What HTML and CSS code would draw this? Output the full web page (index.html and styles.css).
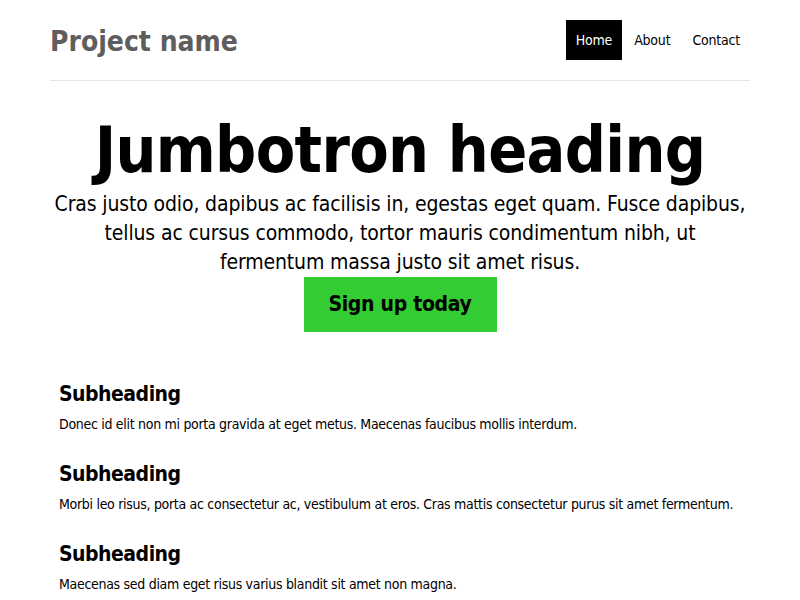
FILE: index.html
```html
<!DOCTYPE html>
<html>
<head>
<meta charset="utf-8">
<title>Jumbotron</title>
<link rel="stylesheet" href="styles.css">
</head>
<body>
<div class="container">
  <header class="masthead">
    <h3 class="brand">Project name</h3>
    <nav class="nav">
      <a class="nav-link active" href="#">Home</a>
      <a class="nav-link" href="#">About</a>
      <a class="nav-link" href="#">Contact</a>
    </nav>
  </header>
  <section class="jumbotron">
    <h1 class="jumbo-title">Jumbotron heading</h1>
    <p class="lead">Cras justo odio, dapibus ac facilisis in, egestas eget quam. Fusce dapibus, tellus ac cursus commodo, tortor mauris condimentum nibh, ut fermentum massa justo sit amet risus.</p>
    <a class="btn" href="#">Sign up today</a>
  </section>
  <section class="marketing">
    <div class="item">
      <h4 class="sub">Subheading</h4>
      <p class="text">Donec id elit non mi porta gravida at eget metus. Maecenas faucibus mollis interdum.</p>
    </div>
    <div class="item">
      <h4 class="sub">Subheading</h4>
      <p class="text">Morbi leo risus, porta ac consectetur ac, vestibulum at eros. Cras mattis consectetur purus sit amet fermentum.</p>
    </div>
    <div class="item">
      <h4 class="sub">Subheading</h4>
      <p class="text">Maecenas sed diam eget risus varius blandit sit amet non magna.</p>
    </div>
  </section>
</div>
</body>
</html>
```
FILE: styles.css
```css
html, body {
  margin: 0;
  padding: 0;
  background: #fff;
}
body {
  font-family: "DejaVu Sans Condensed", "DejaVu Sans", sans-serif;
  color: #000;
}
.container {
  width: 700px;
  margin: 0 auto;
}
.masthead {
  display: flex;
  justify-content: space-between;
  align-items: center;
  padding: 20px 0 20px;
  border-bottom: 1px solid #e5e5e5;
}
.brand {
  margin: 0;
  padding-top: 4px;
  font-size: 28px;
  font-weight: bold;
  color: #5e5e5e;
  line-height: 36px;
}
.nav {
  display: flex;
  gap: 2px;
  margin-right: 0;
}
.nav-link {
  display: block;
  padding: 0 10px;
  line-height: 40px;
  font-size: 14px;
  letter-spacing: -0.2px;
  color: #000;
  text-decoration: none;
}
.nav-link.active {
  background: #000;
  color: #fff;
}
.jumbotron {
  text-align: center;
  padding-top: 31px;
}
.jumbo-title {
  margin: 0;
  font-size: 64px;
  font-weight: bold;
  line-height: 76px;
  letter-spacing: -0.65px;
}
.lead {
  margin: 2px 0 0;
  font-size: 21px;
  line-height: 29px;
  letter-spacing: -0.13px;
}
.btn {
  display: inline-block;
  background: #33cc33;
  color: #000;
  font-weight: bold;
  font-size: 21px;
  letter-spacing: -0.3px;
  text-decoration: none;
  width: 193px;
  line-height: 55px;
}
.marketing {
  padding: 47px 9px 0;
}
.item {
  margin-bottom: 20px;
}
.sub {
  margin: 0;
  font-size: 21px;
  letter-spacing: -0.5px;
  font-weight: bold;
  line-height: 30px;
}
.text {
  margin: 0;
  font-size: 14px;
  letter-spacing: -0.3px;
  line-height: 30px;
}
```
